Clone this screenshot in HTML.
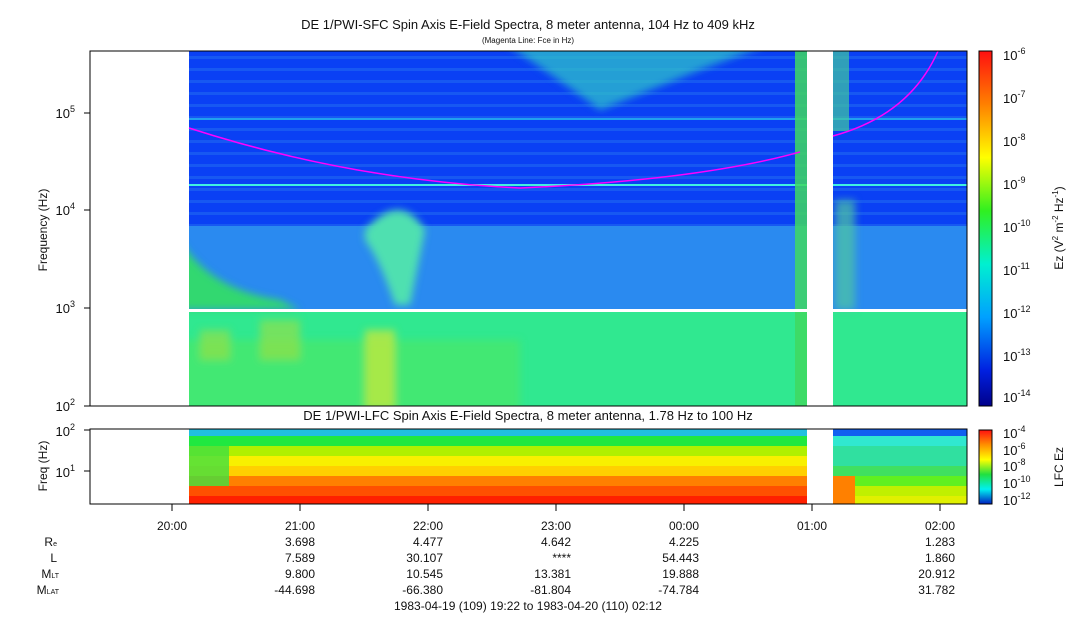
<!DOCTYPE html>
<html><head><style>
body{margin:0;background:#fff;width:1083px;height:620px;overflow:hidden;font-family:"Liberation Sans",sans-serif}
svg text{font-family:"Liberation Sans",sans-serif;fill:#111}
</style></head><body>
<svg width="1083" height="620" viewBox="0 0 1083 620" xmlns="http://www.w3.org/2000/svg">
<defs>
<linearGradient id="jet" x1="0" y1="0" x2="0" y2="1">
<stop offset="0" stop-color="#ff1010"/><stop offset=".15" stop-color="#ff8000"/><stop offset=".3" stop-color="#ffff00"/><stop offset=".45" stop-color="#30f020"/><stop offset=".6" stop-color="#00f0d0"/><stop offset=".75" stop-color="#00a0ff"/><stop offset=".9" stop-color="#0020e0"/><stop offset="1" stop-color="#00008a"/>
</linearGradient>
<linearGradient id="jet2" x1="0" y1="0" x2="0" y2="1">
<stop offset="0" stop-color="#ff1010"/><stop offset=".2" stop-color="#ff9000"/><stop offset=".4" stop-color="#ffff00"/><stop offset=".6" stop-color="#20e040"/><stop offset=".8" stop-color="#00f0f0"/><stop offset="1" stop-color="#0020c0"/>
</linearGradient>
<pattern id="stripes" width="4" height="12" patternUnits="userSpaceOnUse"><rect width="4" height="12" fill="#0a40f4"/><rect y="8" width="4" height="3" fill="#1758f2"/></pattern>
<filter id="bl"><feGaussianBlur stdDeviation="4"/></filter>
<clipPath id="cp"><rect x="189" y="51" width="778" height="355"/></clipPath>
</defs>
<text x="528" y="29" font-size="13" text-anchor="middle">DE 1/PWI-SFC  Spin Axis E-Field Spectra, 8 meter antenna, 104 Hz to 409 kHz</text>
<text x="528" y="43" font-size="8" text-anchor="middle">(Magenta Line: Fce in Hz)</text>
<rect x="189" y="51" width="778" height="180" fill="url(#stripes)"/>
<rect x="189" y="184" width="778" height="2" fill="#40f0e0"/>
<rect x="189" y="118" width="778" height="2" fill="#20a0f0"/>
<rect x="189" y="226" width="778" height="84" fill="#2a8af0"/>
<rect x="189" y="312" width="778" height="94" fill="#30e890"/>
<g filter="url(#bl)" clip-path="url(#cp)">
<path d="M180 240 Q210 290 280 300 L300 310 L180 310Z" fill="#30d870"/>
<path d="M365 230 Q400 190 425 230 L410 305 L395 305 Q380 260 365 240Z" fill="#50e0b0"/>
<path d="M500 40 Q560 80 600 110 Q650 90 700 70 L780 40Z" fill="#30c8c8" opacity=".7"/>
<rect x="180" y="340" width="340" height="70" fill="#50e860" opacity=".6"/>
<rect x="365" y="330" width="30" height="80" fill="#c0e840" opacity=".8"/>
<rect x="260" y="320" width="40" height="40" fill="#a0e040" opacity=".6"/>
<rect x="200" y="330" width="30" height="30" fill="#a0e040" opacity=".6"/>
<rect x="835" y="200" width="20" height="110" fill="#50c8a0" opacity=".7"/>
</g>
<rect x="795" y="51" width="12" height="355" fill="#40d860" opacity=".85"/>
<rect x="833" y="51" width="16" height="80" fill="#40c8a0" opacity=".7"/>
<rect x="807" y="51" width="26" height="356" fill="#fff"/>
<rect x="189" y="309" width="778" height="3" fill="#fff"/>
<path d="M189 128 Q350 180 520 188 Q700 180 800 152" stroke="#ff00ff" stroke-width="1.5" fill="none"/>
<path d="M833 136 Q910 115 938 51" stroke="#ff00ff" stroke-width="1.5" fill="none"/>
<rect x="90" y="51" width="877" height="355" fill="none" stroke="#000" stroke-width="1"/>
<g stroke="#000"><line x1="84" y1="113" x2="90" y2="113"/><line x1="84" y1="210" x2="90" y2="210"/><line x1="84" y1="308" x2="90" y2="308"/><line x1="84" y1="406" x2="90" y2="406"/></g>
<g font-size="13" text-anchor="end"><text x="75" y="118">10<tspan font-size="9" dy="-6">5</tspan></text><text x="75" y="215">10<tspan font-size="9" dy="-6">4</tspan></text><text x="75" y="313">10<tspan font-size="9" dy="-6">3</tspan></text><text x="75" y="411">10<tspan font-size="9" dy="-6">2</tspan></text></g>
<text transform="translate(47,230) rotate(-90)" font-size="12" text-anchor="middle">Frequency (Hz)</text>
<rect x="979" y="51" width="13" height="355" fill="url(#jet)" stroke="#000"/>
<g font-size="13"><text x="1003" y="60">10<tspan font-size="9" dy="-6">-6</tspan></text><text x="1003" y="103">10<tspan font-size="9" dy="-6">-7</tspan></text><text x="1003" y="146">10<tspan font-size="9" dy="-6">-8</tspan></text><text x="1003" y="189">10<tspan font-size="9" dy="-6">-9</tspan></text><text x="1003" y="232">10<tspan font-size="9" dy="-6">-10</tspan></text><text x="1003" y="275">10<tspan font-size="9" dy="-6">-11</tspan></text><text x="1003" y="318">10<tspan font-size="9" dy="-6">-12</tspan></text><text x="1003" y="361">10<tspan font-size="9" dy="-6">-13</tspan></text><text x="1003" y="402">10<tspan font-size="9" dy="-6">-14</tspan></text></g>
<text transform="translate(1063,228) rotate(-90)" font-size="12" text-anchor="middle">Ez (V<tspan font-size="8" dy="-5">2</tspan><tspan dy="5"> m</tspan><tspan font-size="8" dy="-5">-2</tspan><tspan dy="5"> Hz</tspan><tspan font-size="8" dy="-5">-1</tspan><tspan dy="5">)</tspan></text>
<text x="528" y="420" font-size="13" text-anchor="middle">DE 1/PWI-LFC  Spin Axis E-Field Spectra, 8 meter antenna, 1.78 Hz to 100 Hz</text>
<rect x="189" y="429" width="618" height="7" fill="#20c0e0"/>
<rect x="189" y="436" width="618" height="10" fill="#20e840"/>
<rect x="189" y="446" width="618" height="10" fill="#b0f000"/>
<rect x="189" y="456" width="618" height="10" fill="#f8f000"/>
<rect x="189" y="466" width="618" height="10" fill="#ffd000"/>
<rect x="189" y="476" width="618" height="10" fill="#ff8000"/>
<rect x="189" y="486" width="618" height="10" fill="#ff5000"/>
<rect x="189" y="496" width="618" height="8" fill="#ff2000"/>
<rect x="189" y="446" width="40" height="40" fill="#40e040" opacity=".8"/>
<rect x="833" y="429" width="134" height="7" fill="#1060f0"/>
<rect x="833" y="436" width="134" height="10" fill="#30e8d0"/>
<rect x="833" y="446" width="134" height="20" fill="#30e0a0"/>
<rect x="833" y="466" width="134" height="10" fill="#40e060"/>
<rect x="833" y="476" width="134" height="10" fill="#60f020"/>
<rect x="833" y="486" width="134" height="10" fill="#c0f000"/>
<rect x="833" y="496" width="134" height="8" fill="#e0f000"/>
<rect x="833" y="476" width="22" height="28" fill="#ff8000"/>
<rect x="90" y="429" width="877" height="75" fill="none" stroke="#000"/>
<g stroke="#000"><line x1="84" y1="430" x2="90" y2="430"/><line x1="84" y1="471" x2="90" y2="471"/>
<line x1="172" y1="504" x2="172" y2="511"/><line x1="300" y1="504" x2="300" y2="511"/><line x1="428" y1="504" x2="428" y2="511"/><line x1="556" y1="504" x2="556" y2="511"/><line x1="684" y1="504" x2="684" y2="511"/><line x1="812" y1="504" x2="812" y2="511"/><line x1="940" y1="504" x2="940" y2="511"/></g>
<g font-size="13" text-anchor="end"><text x="75" y="436">10<tspan font-size="9" dy="-6">2</tspan></text><text x="75" y="477">10<tspan font-size="9" dy="-6">1</tspan></text></g>
<text transform="translate(47,466) rotate(-90)" font-size="12" text-anchor="middle">Freq (Hz)</text>
<rect x="979" y="430" width="13" height="74" fill="url(#jet2)" stroke="#000"/>
<g font-size="13"><text x="1003" y="438">10<tspan font-size="9" dy="-6">-4</tspan></text><text x="1003" y="455">10<tspan font-size="9" dy="-6">-6</tspan></text><text x="1003" y="471">10<tspan font-size="9" dy="-6">-8</tspan></text><text x="1003" y="488">10<tspan font-size="9" dy="-6">-10</tspan></text><text x="1003" y="505">10<tspan font-size="9" dy="-6">-12</tspan></text></g>
<text transform="translate(1063,467) rotate(-90)" font-size="12" text-anchor="middle">LFC Ez</text>
<g font-size="12" text-anchor="middle"><text x="172" y="530">20:00</text><text x="300" y="530">21:00</text><text x="428" y="530">22:00</text><text x="556" y="530">23:00</text><text x="684" y="530">00:00</text><text x="812" y="530">01:00</text><text x="940" y="530">02:00</text></g>
<g font-size="12" text-anchor="end">
<text x="57" y="546">R<tspan font-size="7">e</tspan></text><text x="57" y="562">L</text><text x="59" y="578">M<tspan font-size="7">LT</tspan></text><text x="59" y="594">M<tspan font-size="7">LAT</tspan></text>
<text x="315" y="546">3.698</text><text x="443" y="546">4.477</text><text x="571" y="546">4.642</text><text x="699" y="546">4.225</text><text x="955" y="546">1.283</text>
<text x="315" y="562">7.589</text><text x="443" y="562">30.107</text><text x="571" y="562">****</text><text x="699" y="562">54.443</text><text x="955" y="562">1.860</text>
<text x="315" y="578">9.800</text><text x="443" y="578">10.545</text><text x="571" y="578">13.381</text><text x="699" y="578">19.888</text><text x="955" y="578">20.912</text>
<text x="315" y="594">-44.698</text><text x="443" y="594">-66.380</text><text x="571" y="594">-81.804</text><text x="699" y="594">-74.784</text><text x="955" y="594">31.782</text>
</g>
<text x="528" y="610" font-size="12" text-anchor="middle">1983-04-19 (109) 19:22 to 1983-04-20 (110) 02:12</text>
</svg>
</body></html>
